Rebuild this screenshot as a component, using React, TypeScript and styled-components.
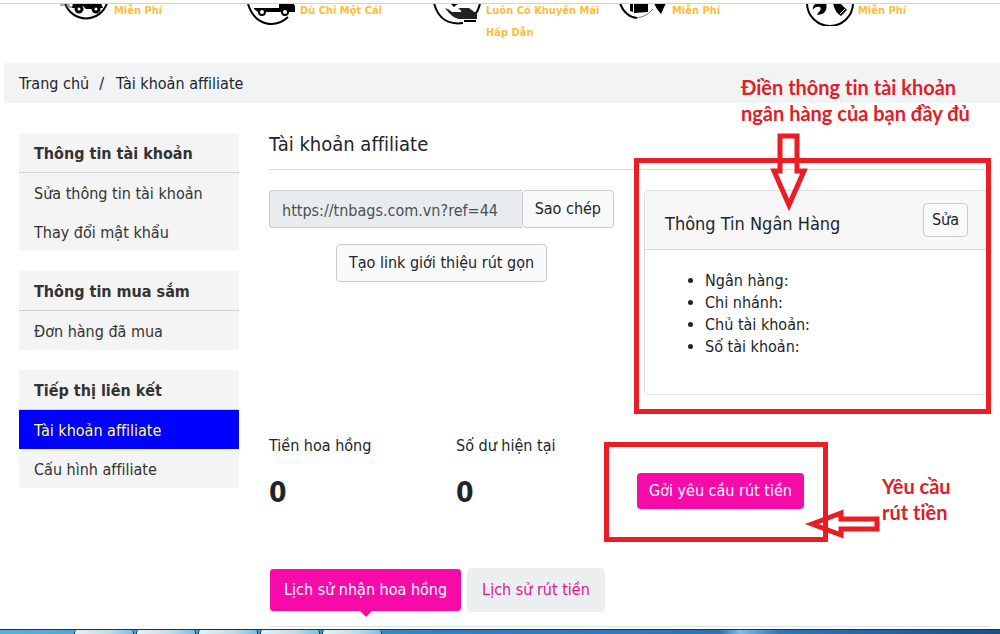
import React from 'react';
import styled, { createGlobalStyle, css } from 'styled-components';

const PINK = '#f60aa8';
const RED = '#ea1c24';
const UI_FONT = '"DejaVu Sans Condensed", Tahoma, "DejaVu Sans", sans-serif';

const GlobalStyle = createGlobalStyle`
  *, *::before, *::after { box-sizing: border-box; }
  html { overflow: hidden; }
  body {
    margin: 0;
    background: #fff;
    color: #212529;
    font-family: ${UI_FONT};
    font-size: 16px;
    font-variant-ligatures: none;
    line-height: 22px;
  }
  button, input { font: inherit; color: inherit; margin: 0; }
  a { color: inherit; text-decoration: none; }
  h1, h2, ul, ol, p, dl, dd { margin: 0; padding: 0; font-weight: 400; }
`;

const Page = styled.div`
  display: flex;
  flex-direction: column;
  min-height: 100vh;
  overflow: hidden;
`;

const TopEdge = styled.div`
  height: 4px;
  border-bottom: 1px solid #d3d3d3;
`;

/* Service strip */
const Services = styled.section`
  overflow: hidden;
  padding: 0 10px 19px 60px;
`;

const ServiceGrid = styled.ul`
  display: grid;
  grid-template-columns: repeat(5, 1fr);
  margin-top: -4px;
  list-style: none;
`;

const Service = styled.li`
  display: flex;
  gap: 2px;
  color: #fbbe3c;
  font-size: 11px;
  font-weight: 700;
`;

const ServiceIcon = styled.svg`
  flex: none;
  width: 52px;
  height: 26px;
`;

/* Breadcrumb */
const Breadcrumb = styled.nav`
  margin-left: 4px;
  padding: 10px 15px 8px;
  background: #f2f3f5;

  ol {
    display: flex;
    list-style: none;
  }
  li + li::before {
    content: '/';
    padding: 0 12px 0 10px;
  }
`;

const Container = styled.div`
  display: grid;
  grid-template-columns: 220px minmax(0, 1fr);
  gap: 30px;
  flex: 1;
  padding: 30px 11px 2px 19px;
`;

/* Sidebar */
const Sidebar = styled.aside`
  display: flex;
  flex-direction: column;
  gap: 20px;
`;

const Menu = styled.nav`
  background: #f4f4f4;
  color: #333;
`;

const MenuTitle = styled.h2`
  padding: 10px 15px 7px;
  border-bottom: 1px solid #d2d2d2;
  font-size: 16px;
  font-weight: 700;
`;

const MenuLink = styled.a<{ $active?: boolean }>`
  display: block;
  padding: 10px 15px 7px;
  ${p => p.$active && css`
    background: #00f;
    color: #ffff5c;
  `}
`;

/* Main column */
const Title = styled.h1`
  padding-bottom: 14px;
  margin-bottom: 20px;
  border-bottom: 1px solid #dcdcdc;
  font-size: 20px;
`;

const Columns = styled.div`
  display: grid;
  grid-template-columns: repeat(2, minmax(0, 1fr));
  gap: 30px;
`;

const LinkForm = styled.form`
  display: flex;
  flex-direction: column;
  align-items: center;
  gap: 16px;
`;

const InputGroup = styled.div`
  display: flex;
  width: 100%;
`;

const LinkInput = styled.input`
  flex: 1;
  min-width: 0;
  height: 38px;
  padding: 2px 12px 0;
  border: 1px solid #c8ccd0;
  border-right-width: 0;
  border-radius: 4px 0 0 4px;
  background: #e9ecef;
  color: #495057;
`;

const LightButton = styled.button<{ $small?: boolean }>`
  height: ${p => (p.$small ? '34px' : '38px')};
  padding: 0 ${p => (p.$small ? '8px' : '12px')};
  border: 1px solid #c8ccd0;
  border-radius: 4px;
  background: #f8f9fa;
  white-space: nowrap;
`;

const Card = styled.section`
  position: relative;
  border: 1px solid #dfdfdf;
  border-radius: 4px;
`;

const CardHeader = styled.header`
  display: flex;
  align-items: center;
  justify-content: space-between;
  padding: 12px 20px;
  border-bottom: 1px solid #d8d8d8;
  background: #f7f7f7;

  h2 {
    padding-top: 8px;
    font-size: 18px;
  }
`;

const CardBody = styled.div`
  padding: 20px;

  ul {
    margin-bottom: 16px;
    padding-left: 40px;
  }
`;

const Stats = styled.div`
  display: grid;
  grid-template-columns: 187px 181px 1fr;
  margin-top: 40px;
`;

const Stat = styled.dl`
  dd {
    margin-top: 20px;
    font-size: 28px;
    font-weight: 700;
    line-height: 32px;
  }
`;

const Withdraw = styled.div`
  position: relative;
  align-self: end;
  justify-self: start;
`;

const PinkButton = styled.button`
  display: block;
  height: 36px;
  padding: 0 12px;
  border: 0;
  border-radius: 4px;
  background: ${PINK};
  color: #fff;
`;

const Tabs = styled.div`
  display: flex;
  gap: 5px;
  margin-top: 59px;
  padding-bottom: 14px;
  border-bottom: 1px solid #dce0e4;
`;

const Tab = styled.button<{ $active?: boolean }>`
  position: relative;
  height: 44px;
  padding: 0 14px;
  border: 1px solid ${p => (p.$active ? '#fff' : '#ebeff0')};
  border-radius: 4px;
  background: ${p => (p.$active ? PINK : '#ebeff0')};
  color: ${p => (p.$active ? '#fff' : '#dd1597')};

  ${p => p.$active && css`
    &::after {
      content: '';
      position: absolute;
      top: 100%;
      left: 50%;
      margin-left: -6px;
      border: 6px solid transparent;
      border-top-color: ${PINK};
      border-bottom: 0;
    }
  `}
`;

/* Red notes drawn over the page */
const Frame = styled.div<{ $inset: string }>`
  position: absolute;
  inset: ${p => p.$inset};
  border: 5px solid ${RED};
  pointer-events: none;
`;

const Arrow = styled.svg<{ $left: number; $top: number }>`
  position: absolute;
  left: ${p => p.$left}px;
  top: ${p => p.$top}px;
  fill: none;
  stroke: ${RED};
  stroke-width: 5;
  pointer-events: none;
`;

const Note = styled.p<{ $left: number; $top: number }>`
  position: absolute;
  left: ${p => p.$left}px;
  top: ${p => p.$top}px;
  color: #db2128;
  font-family: Lato, Calibri, sans-serif;
  font-size: 20px;
  font-weight: 700;
  line-height: 26px;
  white-space: nowrap;
`;

/* Desktop task bar */
const Taskbar = styled.footer`
  display: flex;
  gap: 2px;
  height: 5px;
  padding-left: 74px;
  border-top: 1px solid #17354c;
  background: linear-gradient(90deg, #58b0dc 0, #2f83c4 45%, #2a74b8 72%, #7fbdec 74%, #2b78bb 78%, #174f8c 100%);
`;

const Task = styled.span`
  width: 60px;
  border: 1px solid #173f58;
  border-width: 0 1px;
  border-radius: 3px 3px 0 0;
  background: linear-gradient(100deg, #e6f3f9, #b9dcef 60%, #7fbfe3);
`;

const icons: Record<string, React.ReactNode> = {
  express: (
    <g transform="translate(1 0)">
      <path d="M5 3A22 22 0 0 0 47 3" fill="none" stroke="#000" strokeWidth="2" />
      <path d="M0 5h10M5 7h7" stroke="#555" strokeWidth="1" />
      <path d="M13 3h28l2 5h-3l-3-2-5 3h-6l-3-3-5-1-3 3h-3z" />
      <circle cx="19" cy="9" r="3" fill="#fff" stroke="#000" strokeWidth="3" />
      <circle cx="36" cy="9" r="3" fill="#fff" stroke="#000" strokeWidth="3" />
    </g>
  ),
  truck: (
    <>
      <path d="M3 4C10 26 30 29 43 17" fill="none" stroke="#000" strokeWidth="2" />
      <path d="M9 8h25V3h14l2 3v6H13l-4-3z" />
      <path d="M11 7h23" stroke="#fff" strokeWidth="1" />
      <circle cx="17" cy="12" r="3" fill="#fff" stroke="#000" strokeWidth="2" />
      <circle cx="40" cy="12" r="3" fill="#fff" stroke="#000" strokeWidth="2" />
    </>
  ),
  gift: (
    <>
      <path d="M3 3C7 19 18 25 32 23M43 16Q48 10 49 3" fill="none" stroke="#000" strokeWidth="2" />
      <path d="M19 3l4 4 5-4z" />
      <path d="M14 8q4 1 7 4h9q1-2-3-3l2-1h9l8 6v5H28q-7-1-14-11z" fill="#222" />
      <path d="M33 21h12" stroke="#000" strokeWidth="2" />
    </>
  ),
  box: (
    <>
      <path d="M3 3C8 19 24 23 36 9" fill="none" stroke="#777" strokeWidth="1" />
      <path d="M3 3C6 12 12 17 20 18" fill="none" stroke="#000" strokeWidth="2" />
      <path d="M13 3h3v9l-3-1zM17 3h14v9l-14 1zM37 3h12l-5 11q-5-5-7-11z" />
    </>
  ),
  tools: (
    <>
      <path d="M4 3A23 23 0 0 0 50 3" fill="none" stroke="#000" strokeWidth="2" />
      <path d="M10 10q-1-6 5-7h8q3 11-9 12l1-2q4-3 2-6-5-1-7 3zM30 3h7l7 7-6 6q-6-3-8-13z" />
      <path d="M37 14l5-5" stroke="#fff" strokeWidth="1" />
    </>
  ),
};

const services = [
  { icon: 'express', text: 'Miễn Phí' },
  { icon: 'truck', text: 'Dù Chỉ Một Cái' },
  { icon: 'gift', text: 'Luôn Có Khuyến Mãi Hấp Dẫn' },
  { icon: 'box', text: 'Miễn Phí' },
  { icon: 'tools', text: 'Miễn Phí' },
];

const menus = [
  { title: 'Thông tin tài khoản', links: ['Sửa thông tin tài khoản', 'Thay đổi mật khẩu'] },
  { title: 'Thông tin mua sắm', links: ['Đơn hàng đã mua'] },
  { title: 'Tiếp thị liên kết', links: ['Tài khoản affiliate', 'Cấu hình affiliate'] },
];

const bankFields = ['Ngân hàng:', 'Chi nhánh:', 'Chủ tài khoản:', 'Số tài khoản:'];

export default function App() {
  return (
    <Page>
      <GlobalStyle />
      <TopEdge />
      <Services>
        <ServiceGrid>
          {services.map(s => (
            <Service key={s.icon}>
              <ServiceIcon viewBox="1 0 52 26" aria-hidden="true">{icons[s.icon]}</ServiceIcon>
              <span>{s.text}</span>
            </Service>
          ))}
        </ServiceGrid>
      </Services>

      <Breadcrumb aria-label="Breadcrumb">
        <ol>
          <li><a href="#home">Trang chủ</a></li>
          <li>Tài khoản affiliate</li>
        </ol>
      </Breadcrumb>

      <Container>
        <Sidebar>
          {menus.map(m => (
            <Menu key={m.title} aria-label={m.title}>
              <MenuTitle>{m.title}</MenuTitle>
              {m.links.map(l => (
                <MenuLink key={l} href="#menu" $active={l === 'Tài khoản affiliate'}>{l}</MenuLink>
              ))}
            </Menu>
          ))}
        </Sidebar>

        <main>
          <Title>Tài khoản affiliate</Title>
          <Columns>
            <LinkForm onSubmit={e => e.preventDefault()}>
              <InputGroup>
                <LinkInput aria-label="Link affiliate" readOnly value="https://tnbags.com.vn?ref=44" />
                <LightButton type="button">Sao chép</LightButton>
              </InputGroup>
              <LightButton type="button">Tạo link giới thiệu rút gọn</LightButton>
            </LinkForm>

            <Card>
              <CardHeader>
                <h2>Thông Tin Ngân Hàng</h2>
                <LightButton type="button" $small>Sửa</LightButton>
              </CardHeader>
              <CardBody>
                <ul>
                  {bankFields.map(f => <li key={f}>{f}</li>)}
                </ul>
              </CardBody>
              <Frame $inset="-33px -3px -20px -11px" />
              <Arrow $left={120} $top={-61} width="48" height="84" viewBox="765 130 48 84" aria-hidden="true">
                <path d="M780 136H797V171H804L789 205L774 171H780Z" />
              </Arrow>
              <Note $left={96} $top={-117}>
                Điền thông tin tài khoản<br />ngân hàng của bạn đầy đủ
              </Note>
            </Card>
          </Columns>

          <Stats>
            <Stat><dt>Tiền hoa hồng</dt><dd>0</dd></Stat>
            <Stat><dt>Số dư hiện tại</dt><dd>0</dd></Stat>
            <Withdraw>
              <PinkButton type="button">Gởi yêu cầu rút tiền</PinkButton>
              <Frame $inset="-31px -24px -33px -33px" />
              <Arrow $left={163} $top={31} width="84" height="40" viewBox="800 504 84 40" aria-hidden="true">
                <path d="M812 524L841 513V519H877V529H841V535Z" />
              </Arrow>
              <Note $left={245} $top={0}>Yêu cầu<br />rút tiền</Note>
            </Withdraw>
          </Stats>

          <Tabs role="tablist">
            <Tab type="button" role="tab" aria-selected="true" $active>Lịch sử nhận hoa hồng</Tab>
            <Tab type="button" role="tab" aria-selected="false">Lịch sử rút tiền</Tab>
          </Tabs>
        </main>
      </Container>

      <Taskbar>
        {[1, 2, 3, 4, 5].map(n => <Task key={n} />)}
      </Taskbar>
    </Page>
  );
}
